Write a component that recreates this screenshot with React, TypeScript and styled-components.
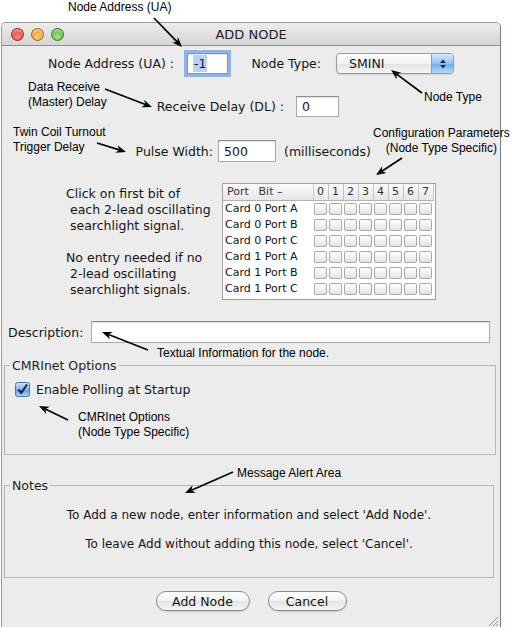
import React from "react";
import styled, { createGlobalStyle } from "styled-components";

const ui = `"DejaVu Sans", "Lucida Grande", Verdana, sans-serif`;
const note = `"Liberation Sans", Helvetica, Arial, sans-serif`;

const GlobalStyle = createGlobalStyle`
  html, body {
    margin: 0;
    padding: 0;
    background: #fff;
  }
  * {
    box-sizing: border-box;
  }
`;

const Page = styled.div`
  position: relative;
  width: 514px;
  height: 627px;
  overflow: hidden;
  padding: 22px 13px 0 1px;
  background: #fff;
  font-family: ${ui};
  font-size: 12px;
  color: #151515;
`;

const Window = styled.div`
  position: relative;
  height: 100%;
  display: flex;
  flex-direction: column;
  border: 1px solid #9a9a9a;
  border-right-color: #6c7e9a;
  border-bottom: none;
  border-radius: 5px 5px 0 0;
  background: #ececec;
  overflow: hidden;
`;

const TitleBar = styled.div`
  flex: none;
  height: 23px;
  display: grid;
  grid-template-columns: 1fr auto 1fr;
  align-items: center;
  background: linear-gradient(#ededed, #d4d4d4);
  border-bottom: 1px solid #8f8f8f;
`;

const Lights = styled.div`
  display: flex;
  gap: 7px;
  padding-left: 9px;
`;

const Light = styled.span<{ $hi: string; $lo: string; $edge: string }>`
  width: 13px;
  height: 13px;
  border-radius: 50%;
  border: 1px solid ${(p) => p.$edge};
  background: radial-gradient(circle at 50% 70%, ${(p) => p.$hi} 0%, ${(p) => p.$lo} 75%),
    ${(p) => p.$lo};
  box-shadow: inset 0 2px 2px rgba(255, 255, 255, 0.55);
`;

const Title = styled.div`
  font-size: 13px;
  color: #222;
`;

const Body = styled.div`
  flex: 1;
  display: flex;
  flex-direction: column;
`;

const Row = styled.div<{ $top: number; $left?: number; $h: number; $gap?: number }>`
  display: flex;
  align-items: center;
  margin-top: ${(p) => p.$top}px;
  padding-left: ${(p) => p.$left ?? 0}px;
  height: ${(p) => p.$h}px;
  gap: ${(p) => p.$gap ?? 0}px;
  flex: none;
`;

const Label = styled.span<{ $w?: number }>`
  width: ${(p) => (p.$w ? `${p.$w}px` : "auto")};
  text-align: right;
  white-space: nowrap;
  font-size: 12.5px;
  flex: none;
`;

const Field = styled.div<{ $w?: number; $focus?: boolean }>`
  width: ${(p) => (p.$w ? `${p.$w}px` : "auto")};
  flex: ${(p) => (p.$w ? "none" : "1")};
  height: 100%;
  display: flex;
  align-items: center;
  padding-left: 5px;
  background: #fff;
  border: 1px solid #a9a9a9;
  border-top-color: #8c8c8c;
  box-shadow: ${(p) =>
    p.$focus
      ? "0 0 0 3px #8fb3e2, inset 0 1px 1px rgba(0,0,0,0.12)"
      : "inset 0 1px 1px rgba(0,0,0,0.12)"};
  border-color: ${(p) => (p.$focus ? "#7397c8" : undefined)};
  font-size: 12.5px;
`;

const Selected = styled.span`
  background: #b4d3f8;
  padding: 1px 1px;
`;

const Select = styled.div`
  width: 118px;
  height: 21px;
  display: flex;
  align-items: center;
  border: 1px solid #9c9c9c;
  border-radius: 4px;
  background: linear-gradient(#ffffff, #f2f2f2 50%, #e4e4e4 51%, #f4f4f4);
  box-shadow: 0 1px 1px rgba(0, 0, 0, 0.12);
  overflow: hidden;
  font-size: 12.5px;
`;

const SelectText = styled.span`
  padding-left: 12px;
  flex: 1;
`;

const Stepper = styled.span`
  width: 22px;
  height: 100%;
  display: flex;
  align-items: center;
  justify-content: center;
  border-left: 1px solid #7c9fcb;
  background: linear-gradient(#d4e8fc, #93c2f4 50%, #6fa9ec 51%, #b7daf9);
`;

const TableArea = styled.div`
  display: flex;
  margin-top: 21px;
  padding-left: 64px;
  height: 117px;
  flex: none;
`;

const Hint = styled.div`
  width: 156px;
  padding-top: 3px;
  white-space: pre;
  font-size: 12.5px;
  line-height: 16px;
`;

const TableBox = styled.div`
  width: 214px;
  height: 117px;
  background: #fff;
  border: 1px solid #9f9f9f;
  overflow: hidden;
`;

const Grid = styled.table`
  border-collapse: collapse;
  table-layout: fixed;
  width: 210px;
  font-size: 11px;
`;

const HeadCell = styled.th<{ $w: number }>`
  width: ${(p) => p.$w}px;
  height: 16px;
  padding: 0;
  line-height: 15px;
  font-weight: normal;
  color: #333;
  text-align: center;
  background: linear-gradient(#fbfbfb, #e6e6e6);
  border-bottom: 1px solid #b0b0b0;
  border-right: 1px solid #c4c4c4;
`;

const HeadSplit = styled.div`
  display: flex;
  justify-content: space-between;
  padding: 0 30px 0 4px;
`;

const GridRow = styled.tr`
  height: 16px;
`;

const PortCell = styled.td`
  height: 16px;
  padding: 0 0 0 2px;
  line-height: 16px;
  white-space: nowrap;
  color: #111;
`;

const BitCell = styled.td`
  height: 16px;
  padding: 0;
  line-height: 0;
  vertical-align: middle;
`;

const BitBox = styled.span`
  display: block;
  width: 13px;
  height: 12px;
  margin: 0 auto;
  border: 1px solid #a9a9a9;
  border-radius: 2px;
  background: linear-gradient(#ffffff, #f1f1f1 50%, #e3e3e3);
`;

const Group = styled.fieldset<{ $top: number; $h: number; $right: number }>`
  flex: none;
  margin: ${(p) => p.$top}px ${(p) => p.$right}px 0 2px;
  height: ${(p) => p.$h}px;
  padding: 0 10px;
  min-width: 0;
  border: 1px solid #b6b6b6;
`;

const Legend = styled.legend`
  margin-left: -5px;
  padding: 0 2px;
  font-size: 12.5px;
  line-height: 15px;
  color: #222;
`;

const CheckRow = styled.div`
  display: flex;
  align-items: center;
  gap: 6px;
  margin-top: 9px;
  font-size: 12.5px;
`;

const NoteText = styled.div`
  display: flex;
  flex-direction: column;
  align-items: center;
  gap: 13px;
  margin-top: 14px;
  font-size: 12px;
  line-height: 16px;
`;

const Buttons = styled.div`
  display: flex;
  justify-content: center;
  gap: 18px;
  margin-top: 13px;
  flex: none;
`;

const Button = styled.button<{ $w: number }>`
  width: ${(p) => p.$w}px;
  height: 20px;
  padding: 0;
  border: 1px solid #8c8c8c;
  border-radius: 10px;
  background: linear-gradient(#ffffff, #f3f3f3 50%, #e4e4e4 51%, #f5f5f5);
  box-shadow: 0 1px 1px rgba(0, 0, 0, 0.15);
  font-family: ${ui};
  font-size: 12.5px;
  color: #151515;
`;

const Grip = styled.svg`
  position: absolute;
  right: 1px;
  bottom: 0;
`;

const Overlay = styled.svg`
  position: absolute;
  left: 0;
  top: 0;
  pointer-events: none;
`;

const Callout = styled.div<{ $x: number; $y: number; $center?: boolean }>`
  position: absolute;
  left: ${(p) => p.$x}px;
  top: ${(p) => p.$y}px;
  font-family: ${note};
  font-size: 12px;
  line-height: 15px;
  color: #000;
  white-space: pre;
  text-align: ${(p) => (p.$center ? "center" : "left")};
`;

const rows = ["Card 0 Port A", "Card 0 Port B", "Card 0 Port C", "Card 1 Port A", "Card 1 Port B", "Card 1 Port C"];
const bits = [0, 1, 2, 3, 4, 5, 6, 7];

const arrows: [number, number, number, number][] = [
  [154, 18, 182, 47],
  [105, 89, 152, 107],
  [97, 143, 126, 152],
  [422, 93, 391, 70],
  [402, 158, 376, 175],
  [148, 350, 102, 332],
  [68, 420, 39, 406],
  [233, 472, 185, 493],
];

const Arrow = ({ a }: { a: [number, number, number, number] }) => {
  const [x1, y1, x2, y2] = a;
  const len = Math.hypot(x2 - x1, y2 - y1);
  const ux = (x2 - x1) / len;
  const uy = (y2 - y1) / len;
  const bx = x2 - ux * 10;
  const by = y2 - uy * 10;
  const pts = `${x2},${y2} ${bx - uy * 4},${by + ux * 4} ${x2 - ux * 7},${y2 - uy * 7} ${bx + uy * 4},${by - ux * 4}`;
  return (
    <g>
      <line x1={x1} y1={y1} x2={x2 - ux * 7} y2={y2 - uy * 7} stroke="#000" strokeWidth={1.7} />
      <polygon points={pts} fill="#000" />
    </g>
  );
};

const App = () => (
  <Page>
    <GlobalStyle />
    <Window>
      <TitleBar>
        <Lights>
          <Light $hi="#ff8d86" $lo="#d8372f" $edge="#9e2a24" />
          <Light $hi="#ffd27a" $lo="#e8921e" $edge="#a8661a" />
          <Light $hi="#b2ec8c" $lo="#4ea735" $edge="#3a7d28" />
        </Lights>
        <Title>ADD NODE</Title>
        <span />
      </TitleBar>
      <Body>
        <Row $top={7} $left={37} $h={21}>
          <Label $w={135}>Node Address (UA) :</Label>
          <Field $w={41} $focus style={{ marginLeft: 13 }}>
            <Selected>-1</Selected>
          </Field>
          <Label $w={72} style={{ marginLeft: 21 }}>Node Type:</Label>
          <span style={{ width: 15 }} />
          <Select>
            <SelectText>SMINI</SelectText>
            <Stepper>
              <svg width="8" height="12" viewBox="0 0 8 12">
                <path d="M4 1.5 L7 5 H1 Z M4 10.5 L7 7 H1 Z" fill="#1c2a3c" />
              </svg>
            </Stepper>
          </Select>
        </Row>
        <Row $top={22} $left={150} $h={21} $gap={12}>
          <Label $w={132}>Receive Delay (DL) :</Label>
          <Field $w={43}>0</Field>
        </Row>
        <Row $top={23} $left={122} $h={22} $gap={5}>
          <Label $w={89}>Pulse Width:</Label>
          <Field $w={58}>500</Field>
          <Label style={{ marginLeft: 3 }}>(milliseconds)</Label>
        </Row>
        <TableArea>
          <Hint>{"Click on first bit of\n each 2-lead oscillating\n searchlight signal.\n\nNo entry needed if no\n 2-lead oscillating\n searchlight signals."}</Hint>
          <TableBox>
            <Grid>
              <thead>
                <GridRow>
                  <HeadCell $w={90}>
                    <HeadSplit>
                      <span>Port</span>
                      <span>Bit –</span>
                    </HeadSplit>
                  </HeadCell>
                  {bits.map((b) => (
                    <HeadCell key={b} $w={15}>
                      {b}
                    </HeadCell>
                  ))}
                </GridRow>
              </thead>
              <tbody>
                {rows.map((r) => (
                  <GridRow key={r}>
                    <PortCell>{r}</PortCell>
                    {bits.map((b) => (
                      <BitCell key={b}>
                        <BitBox />
                      </BitCell>
                    ))}
                  </GridRow>
                ))}
              </tbody>
            </Grid>
          </TableBox>
        </TableArea>
        <Row $top={21} $left={6} $h={22} $gap={8} style={{ paddingRight: 10 }}>
          <Label>Description:</Label>
          <Field />
        </Row>
        <Group $top={15} $h={97} $right={4}>
          <Legend>CMRInet Options</Legend>
          <CheckRow>
            <svg width="15" height="15" viewBox="0 0 15 15">
              <defs>
                <linearGradient id="cb" x1="0" y1="0" x2="0" y2="1">
                  <stop offset="0" stopColor="#cfe3f8" />
                  <stop offset="0.5" stopColor="#82b4ea" />
                  <stop offset="0.51" stopColor="#5f9be2" />
                  <stop offset="1" stopColor="#a9d0f6" />
                </linearGradient>
              </defs>
              <rect x="0.5" y="0.5" width="14" height="14" rx="2" fill="url(#cb)" stroke="#4f77a8" />
              <path d="M3.5 7.5 L6.3 10.8 L12 2.5" fill="none" stroke="#12213a" strokeWidth="2" />
            </svg>
            <span>Enable Polling at Startup</span>
          </CheckRow>
        </Group>
        <Group $top={23} $h={100} $right={6}>
          <Legend>Notes</Legend>
          <NoteText>
            <span>To Add a new node, enter information and select 'Add Node'.</span>
            <span>To leave Add without adding this node, select 'Cancel'.</span>
          </NoteText>
        </Group>
        <Buttons>
          <Button $w={94}>Add Node</Button>
          <Button $w={79}>Cancel</Button>
        </Buttons>
      </Body>
      <Grip width="12" height="14" viewBox="0 0 12 14">
        <path d="M11 4 L2 13 M11 8 L6 13 M11 11 L9 13" stroke="#9a9a9a" strokeWidth="1" />
      </Grip>
    </Window>
    <Overlay width="514" height="627">
      {arrows.map((a, i) => (
        <Arrow key={i} a={a} />
      ))}
    </Overlay>
    <Callout $x={68} $y={0}>Node Address (UA)</Callout>
    <Callout $x={28} $y={80}>{"Data Receive\n(Master) Delay"}</Callout>
    <Callout $x={13} $y={125}>{"Twin Coil Turnout\nTrigger Delay"}</Callout>
    <Callout $x={424} $y={90}>Node Type</Callout>
    <Callout $x={373} $y={126} $center>{"Configuration Parameters\n(Node Type Specific)"}</Callout>
    <Callout $x={157} $y={346}>Textual Information for the node.</Callout>
    <Callout $x={78} $y={410}>{"CMRInet Options\n(Node Type Specific)"}</Callout>
    <Callout $x={237} $y={466}>Message Alert Area</Callout>
  </Page>
);

export default App;
